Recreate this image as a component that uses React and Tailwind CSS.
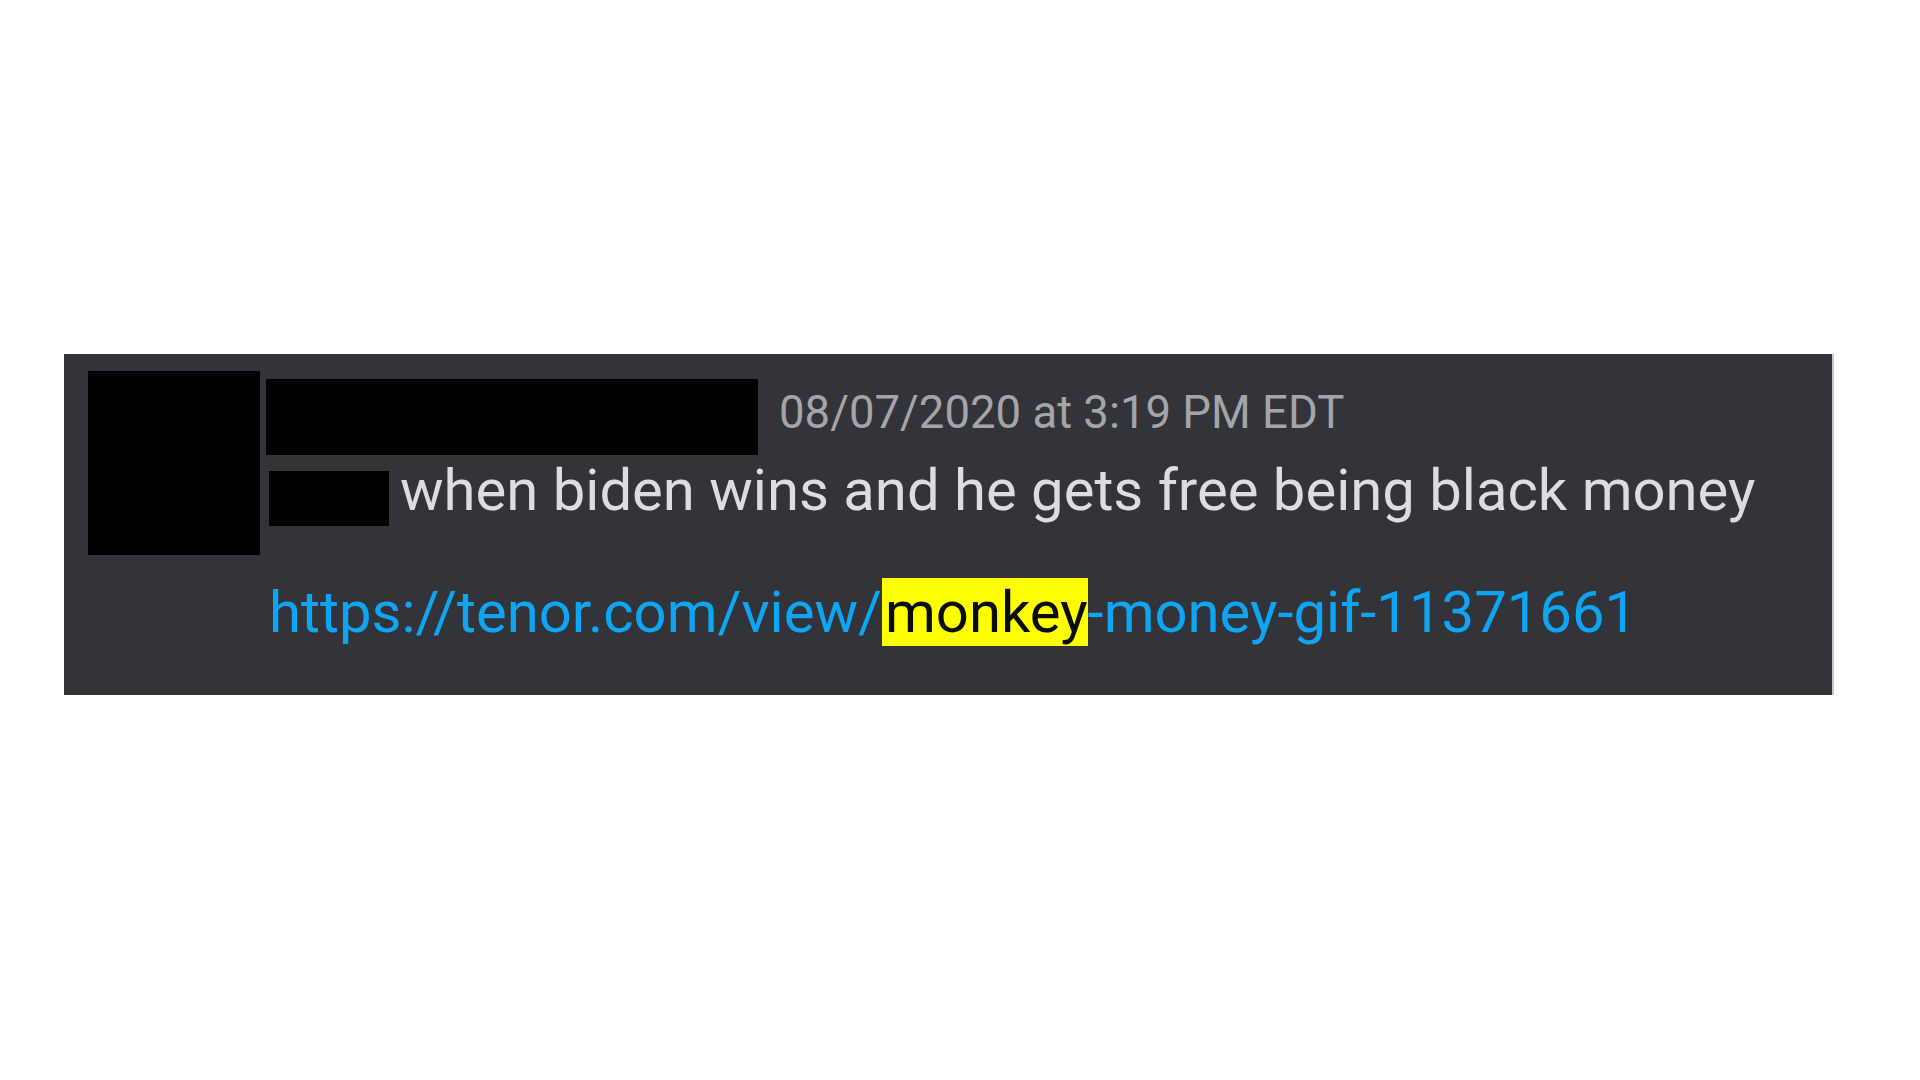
export default function App() {
  return (
    <div className="w-[1920px] h-[1080px] bg-white pt-[354px] pl-[64px]" style={{ fontFamily: 'Roboto, "Liberation Sans", sans-serif' }}>
      <div className="w-[1770px] h-[341px] bg-[#333439] border-r-2 border-[#c8c8ca] flex pt-[17px] pl-[24px]">
        <div className="w-[172px] h-[184px] bg-black shrink-0" />
        <div className="flex flex-col ml-[6px]">
          <div className="flex items-start h-[76px] mt-[8px]">
            <div className="w-[492px] h-[76px] bg-black" />
            <span className="ml-[21px] mt-[11px] text-[45.5px] leading-none text-[#a3a5a9] whitespace-nowrap">08/07/2020 at 3:19 PM EDT</span>
          </div>
          <div className="flex items-start h-[55px] mt-[16px]">
            <div className="w-[120px] h-[55px] bg-black ml-[3px]" />
            <span className="ml-[11px] -mt-[10px] text-[58px] leading-none text-[#dcdde2] whitespace-nowrap">when biden wins and he gets free being black money</span>
          </div>
          <div className="flex items-start mt-[57px] ml-[3px]">
            <span className="text-[58px] leading-none text-[#0ea5f3] whitespace-nowrap">
              https://tenor.com/view/<span className="bg-[#ffff00] text-[#0b0b0b] pl-[3px]">monkey</span>-money-gif-11371661
            </span>
          </div>
        </div>
      </div>
    </div>
  );
}
